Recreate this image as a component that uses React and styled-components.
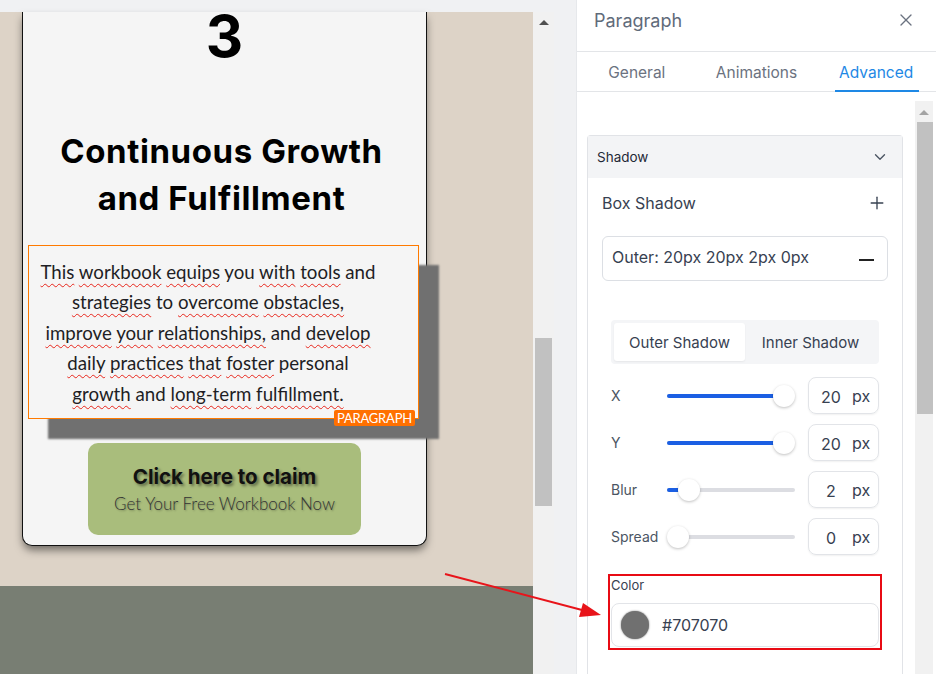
import React from "react";
import styled, { createGlobalStyle } from "styled-components";
import { X, ChevronDown, Plus } from "lucide-react";

const GlobalStyle = createGlobalStyle`
  html, body { margin: 0; padding: 0; }
  body {
    width: 936px;
    height: 674px;
    overflow: hidden;
    font-family: Inter, "Noto Sans", sans-serif;
  }
`;

const Page = styled.div`
  position: relative;
  display: flex;
  width: 936px;
  height: 674px;
  overflow: hidden;
  background: #f0f1f3;
`;

const EditorArea = styled.div`
  width: 576px;
  padding-top: 12px;
  box-sizing: border-box;
`;

const CanvasFrame = styled.div`
  display: flex;
  height: 662px;
`;

const Canvas = styled.div`
  width: 533px;
  display: flex;
  flex-direction: column;
`;

const Section = styled.div`
  height: 574px;
  flex-shrink: 0;
  background: #ddd3c7;
`;

const Footer = styled.div`
  flex: 1;
  background: #787e73;
`;

const Card = styled.div`
  width: 405px;
  box-sizing: border-box;
  margin-left: 22px;
  padding: 1px 0 10px;
  background: #f5f5f5;
  border: 1px solid #111;
  border-top: none;
  border-radius: 0 0 10px 10px;
  box-shadow: 0 5px 9px -1px rgba(0, 0, 0, 0.5);
`;

const Number = styled.div`
  font-family: Inter, sans-serif;
  font-weight: 700;
  font-size: 58px;
  line-height: 46px;
  text-align: center;
  color: #000;
`;

const Title = styled.h2`
  margin: 69px 0 0;
  padding-right: 6px;
  font-family: Inter, sans-serif;
  font-weight: 700;
  font-size: 33px;
  letter-spacing: 0.6px;
  line-height: 47px;
  text-align: center;
  color: #000;
`;

const ParaBox = styled.div`
  position: relative;
  margin: 23px 7px 0 5px;
  padding: 11px 39px 9px 8px;
  border: 1px solid #ff7a00;
  box-shadow: 20px 20px 2px 0 #707070;
  background: #f5f5f5;
  font-family: Lato, "Open Sans", sans-serif;
  font-size: 18.7px;
  line-height: 30.4px;
  text-align: center;
  color: #1e1e24;
`;

const Sp = styled.span`
  text-decoration: underline wavy #e8261c;
  text-decoration-thickness: 1px;
  text-underline-offset: 4px;
`;

const Badge = styled.span`
  position: absolute;
  right: 3px;
  bottom: -8px;
  padding: 0 3px;
  background: #ff7000;
  color: #fff;
  border-radius: 2px;
  font-family: Lato, sans-serif;
  font-size: 13px;
  letter-spacing: -0.2px;
  line-height: 16px;
`;

const ClaimButton = styled.div`
  width: 273px;
  height: 92px;
  margin: 24px auto 0;
  display: flex;
  flex-direction: column;
  align-items: center;
  justify-content: center;
  gap: 3px;
  background: #a9bd7c;
  border-radius: 10px;
`;

const ClaimTitle = styled.div`
  font-family: Inter, sans-serif;
  font-weight: 700;
  font-size: 20.5px;
  line-height: 26px;
  color: #111;
  text-shadow: 2px 2px 3px rgba(0, 0, 0, 0.45);
`;

const ClaimSub = styled.div`
  font-family: Lato, sans-serif;
  font-weight: 300;
  font-size: 17px;
  line-height: 22px;
  color: #333;
  text-shadow: 1px 1px 2px rgba(0, 0, 0, 0.3);
`;

const Scrollbar = styled.div`
  position: relative;
  width: ${(p) => p.$w}px;
  flex-shrink: 0;
  background: #f1f1f1;
`;

const ScrollArrow = styled.div`
  margin: ${(p) => p.$top}px auto 0;
  width: 0;
  height: 0;
  border-left: 5px solid transparent;
  border-right: 5px solid transparent;
  border-bottom: 5px solid ${(p) => p.$color};
`;

const Thumb = styled.div`
  position: absolute;
  left: 2px;
  right: ${(p) => p.$right}px;
  top: ${(p) => p.$top}px;
  height: ${(p) => p.$h}px;
  background: #c1c1c1;
`;

const Panel = styled.div`
  width: 360px;
  height: 674px;
  display: flex;
  flex-direction: column;
  background: #fff;
  border-left: 1px solid #e6e8eb;
  box-sizing: border-box;
`;

const PanelHeader = styled.div`
  height: 52px;
  flex-shrink: 0;
  display: flex;
  justify-content: space-between;
  align-items: flex-start;
  padding: 10px 20px 0 17px;
  box-sizing: border-box;
  border-bottom: 1px solid #e3e5e8;
  color: #6b7280;
`;

const PanelTitle = styled.div`
  font-size: 18px;
  line-height: 22px;
  color: #5f6b7a;
`;

const Tabs = styled.div`
  height: 40px;
  flex-shrink: 0;
  display: flex;
  box-sizing: border-box;
  border-bottom: 1px solid #e3e5e8;
`;

const Tab = styled.div`
  position: relative;
  width: 120px;
  display: flex;
  align-items: center;
  justify-content: center;
  padding-top: 1px;
  font-size: 15.5px;
  color: ${(p) => (p.$active ? "#1e88e5" : "#6b7280")};
  &::after {
    content: "";
    display: ${(p) => (p.$active ? "block" : "none")};
    position: absolute;
    left: 19px;
    right: 17px;
    bottom: -1px;
    height: 2px;
    background: #1e88e5;
  }
`;

const PanelBody = styled.div`
  flex: 1;
  display: flex;
  padding-top: 9px;
  min-height: 0;
`;

const BodyContent = styled.div`
  flex: 1;
  padding: 34px 12px 0 10px;
  overflow: hidden;
`;

const ShadowCard = styled.div`
  border: 1px solid #e1e3e7;
  border-bottom: none;
  border-radius: 4px 4px 0 0;
  height: 600px;
`;

const ShadowHead = styled.div`
  height: 42px;
  display: flex;
  align-items: center;
  justify-content: space-between;
  padding: 0 13px 0 9px;
  background: #f3f4f6;
  font-size: 13.5px;
  color: #1f2937;
`;

const ShadowBody = styled.div`
  padding: 0 14px;
`;

const BoxRow = styled.div`
  height: 50px;
  display: flex;
  align-items: center;
  justify-content: space-between;
  font-size: 16px;
  color: #374151;
  padding-right: 1px;
`;

const ShadowItem = styled.div`
  margin-top: 8px;
  height: 45px;
  box-sizing: border-box;
  display: flex;
  align-items: center;
  justify-content: space-between;
  padding: 0 13px 3px 9px;
  border: 1px solid #dcdfe4;
  border-radius: 6px;
  font-size: 16px;
  color: #374151;
`;

const MinusBar = styled.span`
  width: 15px;
  height: 2px;
  margin-top: 6px;
  background: #222;
`;

const Controls = styled.div`
  padding: 39px 9px 0;
`;

const Segmented = styled.div`
  height: 44px;
  box-sizing: border-box;
  display: flex;
  padding: 3px;
  background: #f4f5f7;
  border-radius: 4px;
`;

const Segment = styled.div`
  width: ${(p) => (p.$active ? "131px" : "auto")};
  flex: ${(p) => (p.$active ? "none" : 1)};
  display: flex;
  align-items: center;
  justify-content: center;
  font-size: 15px;
  color: #374151;
  background: ${(p) => (p.$active ? "#fff" : "transparent")};
  border-radius: 3px;
  box-shadow: ${(p) => (p.$active ? "0 1px 2px rgba(0,0,0,0.06)" : "none")};
`;

const SliderList = styled.div`
  margin-top: 13px;
  display: flex;
  flex-direction: column;
  gap: 10px;
`;

const SliderRow = styled.div`
  height: 37px;
  display: flex;
  align-items: center;
`;

const SliderLabel = styled.div`
  width: 56px;
  font-size: 14px;
  color: #4b5563;
`;

const Track = styled.div`
  position: relative;
  width: 128px;
  height: 4px;
  margin-right: 13px;
  border-radius: 2px;
  background: #dcdde2;
`;

const Fill = styled.div`
  height: 100%;
  border-radius: 2px;
  background: #1b5fe3;
`;

const Knob = styled.div`
  position: absolute;
  top: 50%;
  width: 22px;
  height: 22px;
  margin: -11px 0 0 -11px;
  border-radius: 50%;
  background: #fff;
  box-shadow: 0 1px 3px rgba(0, 0, 0, 0.25);
`;

const NumBox = styled.div`
  width: 71px;
  height: 37px;
  box-sizing: border-box;
  display: flex;
  align-items: center;
  border: 1px solid #e2e4e8;
  border-radius: 8px;
  box-shadow: 0 1px 2px rgba(0, 0, 0, 0.06);
  font-size: 16px;
  color: #374151;
`;

const NumValue = styled.span`
  width: 44px;
  text-align: center;
  margin-top: 3px;
`;

const NumUnit = styled.span`
  margin-left: -1px;
`;

const ColorGroup = styled.div`
  margin-top: 22px;
  outline: 2px solid #e80b14;
  outline-offset: 1px;
`;

const ColorLabel = styled.div`
  font-size: 13px;
  line-height: 16px;
  color: #374151;
`;

const ColorInput = styled.div`
  margin-top: 10px;
  height: 44px;
  box-sizing: border-box;
  display: flex;
  align-items: center;
  padding-left: 9px;
  border: 1px solid #e2e4e8;
  border-radius: 8px;
  font-size: 16px;
  color: #374151;
`;

const Swatch = styled.span`
  width: 28px;
  height: 28px;
  border-radius: 50%;
  background: ${(p) => p.$color};
  box-shadow: 0 0 2px ${(p) => p.$color};
  margin-right: 13px;
`;

const Overlay = styled.svg`
  position: absolute;
  left: 0;
  top: 0;
  pointer-events: none;
`;

const sliders = [
  { label: "X", pos: 1, value: "20" },
  { label: "Y", pos: 1, value: "20" },
  { label: "Blur", pos: 0.1, value: "2" },
  { label: "Spread", pos: 0, value: "0" },
];

function Slider({ label, pos, value }) {
  const center = 11 + pos * 106;
  return (
    <SliderRow>
      <SliderLabel>{label}</SliderLabel>
      <Track>
        <Fill style={{ width: pos === 0 ? 0 : center }} />
        <Knob style={{ left: center }} />
      </Track>
      <NumBox>
        <NumValue>{value}</NumValue>
        <NumUnit>px</NumUnit>
      </NumBox>
    </SliderRow>
  );
}

export default function App() {
  return (
    <>
      <GlobalStyle />
      <Page>
        <EditorArea>
          <CanvasFrame>
            <Canvas>
              <Section>
                <Card>
                  <Number>3</Number>
                  <Title>
                    Continuous Growth
                    <br />
                    and Fulfillment
                  </Title>
                  <ParaBox>
                    <Sp>This</Sp> <Sp>workbook</Sp> <Sp>equips</Sp> you{" "}
                    <Sp>with</Sp> <Sp>tools</Sp> and <Sp>strategies</Sp> to{" "}
                    <Sp>overcome</Sp> <Sp>obstacles,</Sp> <Sp>improve</Sp>{" "}
                    <Sp>your</Sp> <Sp>relationships,</Sp> and <Sp>develop</Sp>{" "}
                    <Sp>daily</Sp> <Sp>practices</Sp> <Sp>that</Sp>{" "}
                    <Sp>foster</Sp> personal <Sp>growth</Sp> and{" "}
                    <Sp>long-term</Sp> <Sp>fulfillment.</Sp>
                    <Badge>PARAGRAPH</Badge>
                  </ParaBox>
                  <ClaimButton>
                    <ClaimTitle>Click here to claim</ClaimTitle>
                    <ClaimSub>Get Your Free Workbook Now</ClaimSub>
                  </ClaimButton>
                </Card>
              </Section>
              <Footer />
            </Canvas>
            <Scrollbar $w={21}>
              <ScrollArrow $top={8} $color="#505050" />
              <Thumb $top={326} $h={168} $right={2} />
            </Scrollbar>
          </CanvasFrame>
        </EditorArea>

        <Panel>
          <PanelHeader>
            <PanelTitle>Paragraph</PanelTitle>
            <X size={20} strokeWidth={1.6} />
          </PanelHeader>
          <Tabs>
            <Tab>General</Tab>
            <Tab>Animations</Tab>
            <Tab $active>Advanced</Tab>
          </Tabs>
          <PanelBody>
            <BodyContent>
              <ShadowCard>
                <ShadowHead>
                  Shadow
                  <ChevronDown size={18} color="#4b5563" strokeWidth={1.8} />
                </ShadowHead>
                <ShadowBody>
                  <BoxRow>
                    Box Shadow
                    <Plus size={20} color="#374151" strokeWidth={1.6} />
                  </BoxRow>
                  <ShadowItem>
                    Outer: 20px 20px 2px 0px
                    <MinusBar />
                  </ShadowItem>
                  <Controls>
                    <Segmented>
                      <Segment $active>Outer Shadow</Segment>
                      <Segment>Inner Shadow</Segment>
                    </Segmented>
                    <SliderList>
                      {sliders.map((s) => (
                        <Slider key={s.label} {...s} />
                      ))}
                    </SliderList>
                    <ColorGroup>
                      <ColorLabel>Color</ColorLabel>
                      <ColorInput>
                        <Swatch $color="#707070" />
                        #707070
                      </ColorInput>
                    </ColorGroup>
                  </Controls>
                </ShadowBody>
              </ShadowCard>
            </BodyContent>
            <Scrollbar $w={18} style={{ marginRight: 3 }}>
              <ScrollArrow $top={9} $color="#a3a3a3" />
              <Thumb $top={21} $h={292} $right={0} />
            </Scrollbar>
          </PanelBody>
        </Panel>

        <Overlay width="936" height="674">
          <line x1="445" y1="574" x2="582" y2="610" stroke="#e8141a" strokeWidth="2" />
          <polygon points="601,615 579,617 583,603" fill="#e8141a" />
        </Overlay>
      </Page>
    </>
  );
}
